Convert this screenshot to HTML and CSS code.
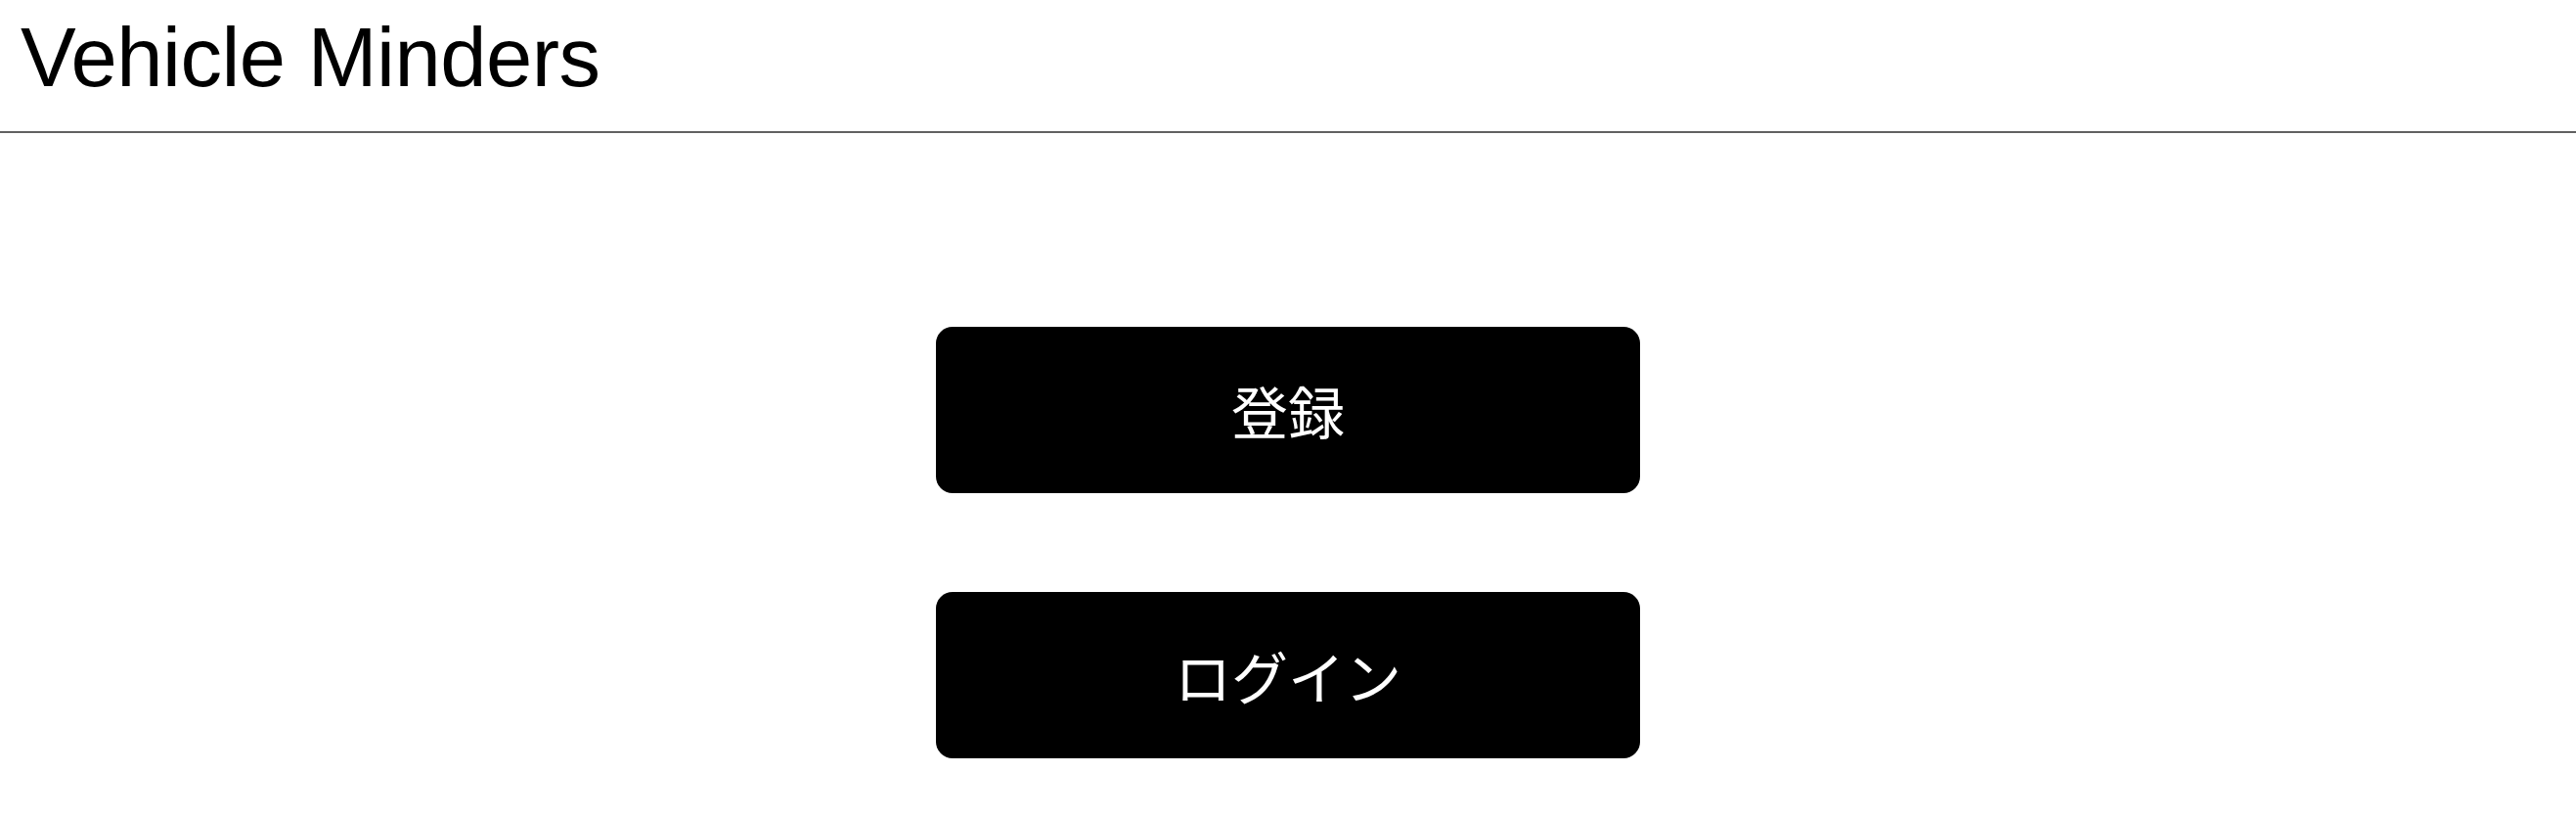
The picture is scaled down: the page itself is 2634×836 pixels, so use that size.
FILE: index.html
```html
<!DOCTYPE html>
<html lang="ja">
<head>
<meta charset="utf-8">
<title>Vehicle Minders</title>
<link rel="stylesheet" href="styles.css">
</head>
<body>
<header class="site-header">
  <h1 class="site-title">Vehicle Minders</h1>
</header>
<main class="actions">
  <button class="action-btn" type="button">登録</button>
  <button class="action-btn" type="button">ログイン</button>
</main>
</body>
</html>
```
FILE: styles.css
```css
html, body {
  margin: 0;
  padding: 0;
  background: #ffffff;
}
body {
  font-family: "Liberation Sans", Arial, sans-serif;
  color: #000;
}
.site-header {
  height: 134px;
  border-bottom: 2px solid #616161;
  box-sizing: content-box;
  display: flex;
  align-items: flex-start;
}
.site-title {
  margin: 0;
  padding: 10px 0 0 21px;
  font-family: "Liberation Sans", Arial, sans-serif;
  font-weight: 400;
  font-size: 85px;
  line-height: 98px;
  letter-spacing: -0.5px;
}
.actions {
  display: flex;
  flex-direction: column;
  align-items: center;
  gap: 101px;
  padding-top: 198px;
}
.action-btn {
  width: 720px;
  height: 170px;
  background: #000;
  color: #fff;
  border: none;
  border-radius: 17px;
  font-family: "Noto Sans CJK JP", "Noto Sans", sans-serif;
  font-size: 58px;
  font-weight: 400;
  display: flex;
  align-items: center;
  justify-content: center;
  padding: 0;
  cursor: pointer;
}
```
